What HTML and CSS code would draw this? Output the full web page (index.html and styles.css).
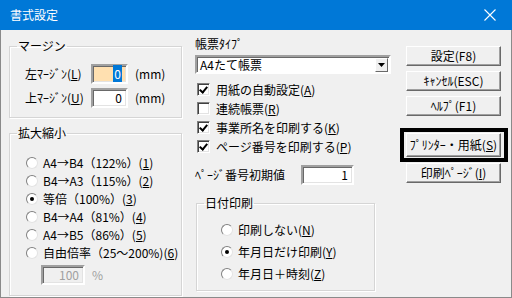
FILE: index.html
```html
<!DOCTYPE html>
<html lang="ja">
<head>
    <meta charset="UTF-8">
    <title>書式設定</title>
    <link rel="stylesheet" href="styles.css">
</head>
<body>
    <div class="window">
        <div class="titlebar">
            <span class="title">書式設定</span>
            <svg class="close" width="12" height="12" viewBox="0 0 12 12">
                <path d="M0.5 0.5L11.5 11.5M11.5 0.5L0.5 11.5" stroke="#fff" stroke-width="1.1"/>
            </svg>
        </div>

        <div class="content">
            <!-- left: margins + scale -->
            <div class="col col-left">
                <fieldset class="group group-margin">
                    <legend>マージン</legend>
                    <div class="group-body">
                        <div class="field-row">
                            <span class="label">左ﾏｰｼﾞﾝ(<u>L</u>)</span>
                            <span class="edit edit-num edit-active"><span class="sel">0</span></span>
                            <span class="unit">(mm)</span>
                        </div>
                        <div class="field-row">
                            <span class="label">上ﾏｰｼﾞﾝ(<u>U</u>)</span>
                            <span class="edit edit-num">0</span>
                            <span class="unit">(mm)</span>
                        </div>
                    </div>
                </fieldset>

                <fieldset class="group group-scale">
                    <legend>拡大縮小</legend>
                    <div class="group-body">
                        <div class="opt"><span class="radio"></span>A4→B4（122%）(<u>1</u>)</div>
                        <div class="opt"><span class="radio"></span>B4→A3（115%）(<u>2</u>)</div>
                        <div class="opt"><span class="radio on"></span>等倍（100%）(<u>3</u>)</div>
                        <div class="opt"><span class="radio"></span>B4→A4（81%）(<u>4</u>)</div>
                        <div class="opt"><span class="radio"></span>A4→B5（86%）(<u>5</u>)</div>
                        <div class="opt"><span class="radio"></span>自由倍率（25～200%)(<u>6</u>)</div>
                        <div class="free-row">
                            <span class="edit edit-num edit-disabled">100</span>
                            <span class="unit muted">%</span>
                        </div>
                    </div>
                </fieldset>
            </div>

            <!-- middle: form type, options, date -->
            <div class="col col-mid">
                <div class="label">帳票ﾀｲﾌﾟ</div>
                <div class="combo">
                    <span class="combo-text">A4たて帳票</span>
                    <span class="combo-btn">
                        <svg width="7" height="4" viewBox="0 0 7 4"><path d="M0 0h7L3.5 4z" fill="#000"/></svg>
                    </span>
                </div>

                <div class="checks">
                    <div class="opt"><span class="check on"></span>用紙の自動設定(<u>A</u>)</div>
                    <div class="opt"><span class="check"></span>連続帳票(<u>R</u>)</div>
                    <div class="opt"><span class="check on"></span>事業所名を印刷する(<u>K</u>)</div>
                    <div class="opt"><span class="check on"></span>ページ番号を印刷する(<u>P</u>)</div>
                </div>

                <div class="page-row">
                    <span class="label">ﾍﾟｰｼﾞ番号初期値</span>
                    <span class="edit edit-num edit-page">1</span>
                </div>

                <fieldset class="group group-date">
                    <legend>日付印刷</legend>
                    <div class="group-body">
                        <div class="opt"><span class="radio"></span>印刷しない(<u>N</u>)</div>
                        <div class="opt"><span class="radio on"></span>年月日だけ印刷(<u>Y</u>)</div>
                        <div class="opt"><span class="radio"></span>年月日＋時刻(<u>Z</u>)</div>
                    </div>
                </fieldset>
            </div>

            <!-- right: buttons -->
            <div class="col col-right">
                <button class="btn">設定(F8)</button>
                <button class="btn">ｷｬﾝｾﾙ(ESC)</button>
                <button class="btn">ﾍﾙﾌﾟ(F1)</button>
                <div class="focus-frame">
                    <button class="btn">ﾌﾟﾘﾝﾀｰ・用紙(<u>S</u>)</button>
                </div>
                <button class="btn btn-tight">印刷ﾍﾟｰｼﾞ(<u>I</u>)</button>
            </div>
        </div>
    </div>
</body>
</html>
```

FILE: styles.css
```css
* { margin: 0; padding: 0; box-sizing: border-box; }

body {
    width: 512px;
    height: 298px;
    overflow: hidden;
    background: #f0f0f0;
    font-family: "Noto Sans CJK JP", "Noto Sans", sans-serif;
    font-size: 12px;
    line-height: 16px;
    color: #000;
}

u { text-decoration: underline; text-underline-offset: 1px; }

.window {
    width: 512px;
    height: 298px;
    border: 1px solid #8a8a8a;
    border-top: none;
    background: #f0f0f0;
}

/* Title bar */
.titlebar {
    height: 30px;
    margin: 0 -1px;
    background: #0078d7;
    color: #fff;
    display: flex;
    align-items: center;
    justify-content: space-between;
    padding: 0 16px 0 10px;
}
.title { font-size: 12px; }

.content {
    display: flex;
    align-items: flex-start;
    padding-left: 8px;
}

.col { display: flex; flex-direction: column; }
.col-left { width: 173px; padding-top: 8px; }
.col-mid { width: 196px; margin-left: 13px; padding-top: 6px; }
.col-right { width: 110px; margin-left: 9px; padding-top: 16px; }

/* Group boxes */
.group {
    border: 1px solid #d5d5d5;
    box-shadow: inset 1px 1px 0 #fff, 1px 1px 0 #fff;
    min-width: 0;
}
.group legend {
    margin-left: 7px;
    padding: 0 1px;
    line-height: 16px;
}
.group-margin { padding: 10px 0 9px; }
.group-margin .group-body { padding-left: 15px; }
.group-scale { margin-top: 7px; padding: 13px 0 10px; }
.group-scale .group-body { padding-left: 16px; }
.group-date { margin-top: 10px; margin-left: 1px; width: 179px; padding: 8px 0 5px; }
.group-date .group-body { padding-left: 24px; }

.field-row {
    display: flex;
    align-items: center;
    height: 20px;
}
.field-row + .field-row { margin-top: 4px; }
.field-row .label { width: 66px; }
.unit { margin-left: 7px; }
.muted { color: #a0a0a0; }

/* Edit boxes */
.edit {
    display: inline-block;
    height: 20px;
    background: #fff;
    border: 2px solid;
    border-color: #a0a0a0 #fff #fff #a0a0a0;
    box-shadow: inset 1px 1px 0 #696969, inset -1px -1px 0 #e3e3e3;
    line-height: 16px;
}
.edit-num { width: 37px; text-align: right; padding-right: 4px; }
.edit-active { background: #ffe0b0; }
.sel { background: #0078d7; color: #fff; padding: 0 1px; }
.edit-disabled { width: 44px; background: #f0f0f0; color: #a0a0a0; }

.free-row {
    display: flex;
    align-items: center;
    margin: 3px 0 0 15px;
}

/* Radio / check options */
.opt {
    display: flex;
    align-items: center;
    height: 18px;
    white-space: nowrap;
}
.group-date .opt { height: 22px; }
.checks { margin-top: 6px; padding-left: 2px; }
.checks .opt { height: 19px; }

.radio {
    width: 12px;
    height: 12px;
    border-radius: 50%;
    background: #fff;
    border: 1px solid;
    border-color: #808080 #e3e3e3 #e3e3e3 #808080;
    margin-right: 5px;
    display: flex;
    align-items: center;
    justify-content: center;
    flex: none;
}
.radio.on::after {
    content: "";
    width: 4px;
    height: 4px;
    border-radius: 50%;
    background: #000;
}

.check {
    width: 13px;
    height: 13px;
    background: #fff;
    border: 1px solid;
    border-color: #808080 #fff #fff #808080;
    box-shadow: inset 1px 1px 0 #404040, inset -1px -1px 0 #e3e3e3;
    margin-right: 6px;
    flex: none;
    position: relative;
}
.check.on::after {
    content: "";
    position: absolute;
    left: 3px;
    top: 1px;
    width: 3px;
    height: 6px;
    border: solid #000;
    border-width: 0 2px 2px 0;
    transform: rotate(40deg);
}

/* Combo box */
.combo {
    margin-top: 3px;
    height: 19px;
    display: flex;
    align-items: center;
    justify-content: space-between;
    background: #fff;
    border: 2px solid;
    border-color: #a0a0a0 #fff #fff #a0a0a0;
    box-shadow: inset 1px 1px 0 #696969;
    padding: 0 1px 0 3px;
}
.combo-btn {
    width: 13px;
    height: 14px;
    background: #f0f0f0;
    border: 1px solid;
    border-color: #fff #696969 #696969 #fff;
    display: flex;
    align-items: center;
    justify-content: center;
}

.page-row {
    display: flex;
    align-items: center;
    margin-top: 9px;
    height: 20px;
}
.page-row .label { width: 106px; }
.edit-page { width: 53px; }

/* Buttons */
.btn {
    display: block;
    width: 95px;
    height: 20px;
    margin-left: 6px;
    font: inherit;
    color: #000;
    background: #f0f0f0;
    border: 1px solid;
    border-color: #fff #696969 #696969 #fff;
    box-shadow: inset -1px -1px 0 #a0a0a0;
}
.btn + .btn { margin-top: 5px; }
.focus-frame {
    margin-top: 12px;
    width: 108px;
    border: 4px solid #000;
    padding: 1px 0 1px 1px;
}
.focus-frame .btn { margin-left: 1px; height: 24px; }
.btn-tight { margin-top: 1px; }
```
